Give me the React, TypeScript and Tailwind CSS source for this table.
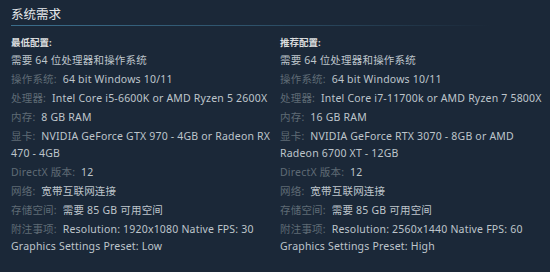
import React from "react";

type Row = { label?: string; value: React.ReactNode };

const minRows: Row[] = [
  { value: "需要 64 位处理器和操作系统" },
  { label: "操作系统:", value: "64 bit Windows 10/11" },
  { label: "处理器:", value: "Intel Core i5-6600K or AMD Ryzen 5 2600X" },
  { label: "内存:", value: "8 GB RAM" },
  { label: "显卡:", value: "NVIDIA GeForce GTX 970 - 4GB or Radeon RX 470 - 4GB" },
  { label: "DirectX 版本:", value: "12" },
  { label: "网络:", value: "宽带互联网连接" },
  { label: "存储空间:", value: "需要 85 GB 可用空间" },
  {
    label: "附注事项:",
    value: (
      <>
        Resolution: 1920x1080 Native FPS: 30
        <br />
        Graphics Settings Preset: Low
      </>
    ),
  },
];

const recRows: Row[] = [
  { value: "需要 64 位处理器和操作系统" },
  { label: "操作系统:", value: "64 bit Windows 10/11" },
  { label: "处理器:", value: "Intel Core i7-11700k or AMD Ryzen 7 5800X" },
  { label: "内存:", value: "16 GB RAM" },
  { label: "显卡:", value: "NVIDIA GeForce RTX 3070 - 8GB or AMD Radeon 6700 XT - 12GB" },
  { label: "DirectX 版本:", value: "12" },
  { label: "网络:", value: "宽带互联网连接" },
  { label: "存储空间:", value: "需要 85 GB 可用空间" },
  {
    label: "附注事项:",
    value: (
      <>
        Resolution: 2560x1440 Native FPS: 60
        <br />
        Graphics Settings Preset: High
      </>
    ),
  },
];

function Column({ title, rows, width }: { title: string; rows: Row[]; width: string }) {
  return (
    <div className={`${width} shrink-0`}>
      <div className="text-[9.5px] leading-[12px] font-bold text-[#dcdedf]">{title}</div>
      <ul className="mt-[3px]">
        {rows.map((r, i) => (
          <li
            key={i}
            className="mb-[2px] text-[10.5px] leading-[17px] tracking-[0.2px] text-[#bec5cb]"
          >
            {r.label && <span className="text-[#5f6b75] pr-[3px]">{r.label}</span>}
            {r.label && " "}
            {r.value}
          </li>
        ))}
      </ul>
    </div>
  );
}

export default function App() {
  return (
    <div
      className="w-[550px] h-[272px] overflow-hidden bg-[#1b2838]"
      style={{ fontFamily: '"Noto Sans", "Noto Sans CJK SC", sans-serif' }}
    >
      <div className="pl-[11px] pt-[7px]">
        <div className="text-[12.5px] leading-[16px] text-[#e6e9eb]">系统需求</div>
        <div className="mt-[2px] h-px w-[480px] bg-gradient-to-r from-[#3b6e8c] via-[#3b6e8c]/60 to-transparent" />
      </div>
      <div className="mt-[11px] flex gap-[7px] pl-[11px]">
        <Column title="最低配置:" rows={minRows} width="w-[262px]" />
        <Column title="推荐配置:" rows={recRows} width="w-[266px]" />
      </div>
    </div>
  );
}
